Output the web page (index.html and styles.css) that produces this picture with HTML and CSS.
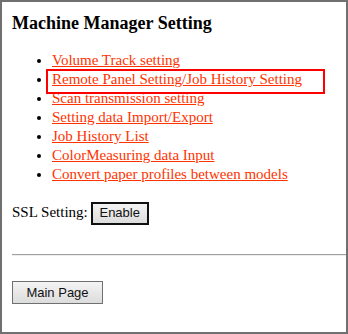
FILE: index.html
```html
<!DOCTYPE html>
<html lang="en">
  <head>
    <meta charset="UTF-8" />
    <title>Machine Manager Setting</title>
    <link rel="stylesheet" href="styles.css">
  </head>
  <body>
    <div class="frame">
      <h1 class="title">Machine Manager Setting</h1>
      <ul class="menu">
        <li><a href="#">Volume Track setting</a></li>
        <li><a href="#" class="selected">Remote Panel Setting/Job History Setting</a></li>
        <li><a href="#">Scan transmission setting</a></li>
        <li><a href="#">Setting data Import/Export</a></li>
        <li><a href="#">Job History List</a></li>
        <li><a href="#">ColorMeasuring data Input</a></li>
        <li><a href="#">Convert paper profiles between models</a></li>
      </ul>
      <div class="ssl">
        SSL Setting:<button class="btn btn-dark">Enable</button>
      </div>
      <hr class="line" />
      <button class="btn btn-main">Main Page</button>
    </div>
  </body>
</html>
```

FILE: styles.css
```css
body {
  margin: 0;
  padding: 0;
  background: white;
  font-family: "Liberation Serif", "Times New Roman", serif;
}
.frame {
  width: 348px;
  height: 334px;
  box-sizing: border-box;
  border: 2px solid #707070;
  padding: 0 0 0 10px;
  overflow: hidden;
}
.title {
  font-size: 18px;
  font-weight: bold;
  margin: 11px 0 17px 0;
}
.menu {
  margin: 0;
  padding-left: 40px;
  font-size: 15px;
  line-height: 19px;
}
.menu a {
  color: #ff3300;
  text-decoration: underline;
}
.menu a.selected {
  outline: 2px solid red;
  padding: 0 21px 5px 4px;
  margin-left: -4px;
}
.ssl {
  margin-top: 18px;
  font-size: 15px;
}
.btn {
  font-family: "Liberation Sans", Arial, sans-serif;
  font-size: 13px;
  color: #111;
  background: linear-gradient(#f4f4f4, #dcdcdc);
}
.btn-dark {
  border: 2px solid #111;
  width: 58px;
  height: 23px;
  margin-left: 3px;
  padding: 0 0 2px 0;
}
.btn-main {
  border: 1px solid #707070;
  width: 91px;
  height: 23px;
  margin-top: 25px;
  padding: 0;
}
.line {
  margin: 29px 0 0 0;
  border: 0;
  border-top: 1px solid #a0a0a0;
  border-bottom: 1px solid #eeeeee;
}
```
